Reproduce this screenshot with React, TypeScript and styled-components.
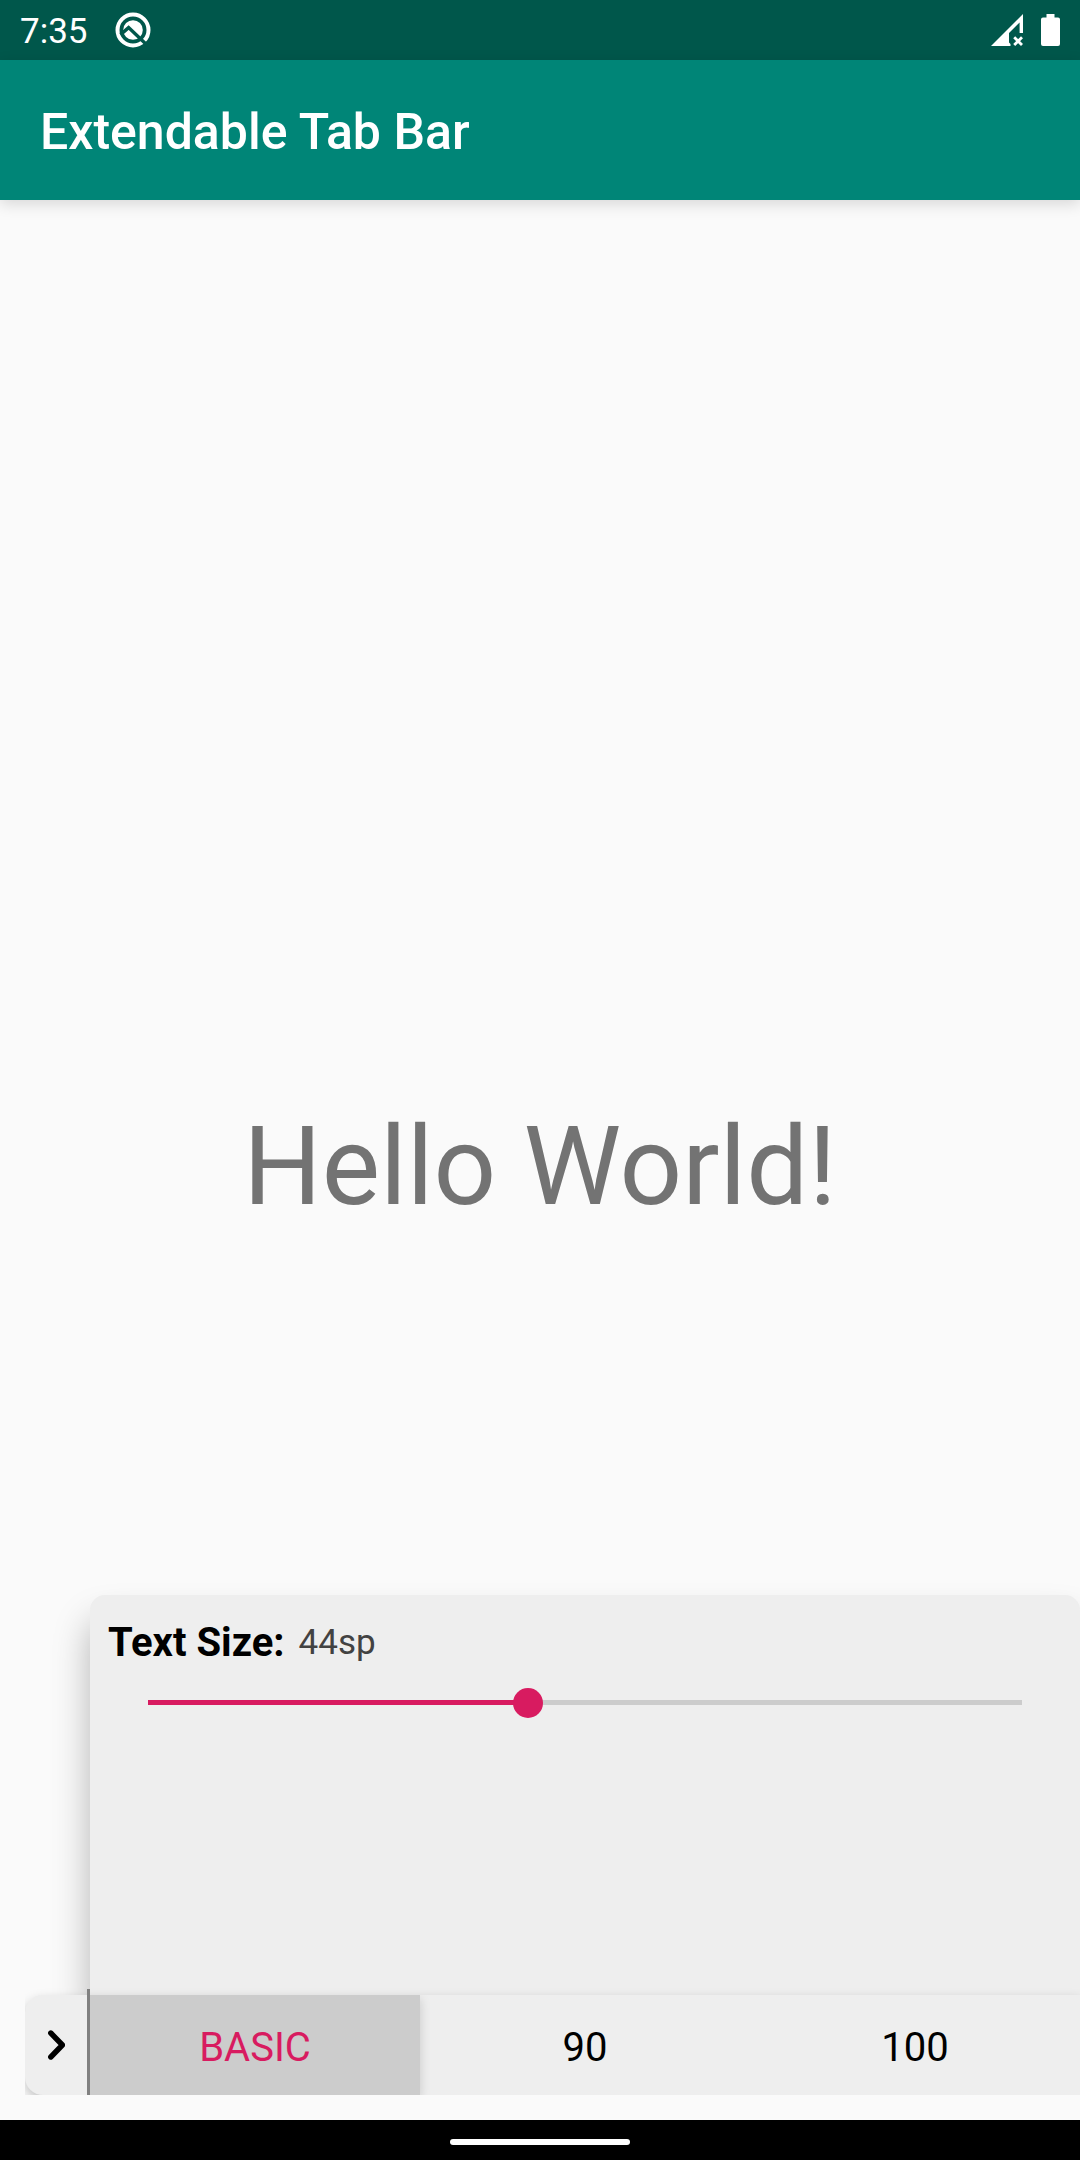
import React, { useState } from "react";
import styled, { createGlobalStyle } from "styled-components";

const GlobalStyle = createGlobalStyle`
  *, *::before, *::after { box-sizing: border-box; }
  body { margin: 0; background: #fafafa; }
  button, input { font: inherit; color: inherit; }
`;

const accent = "#d81b60";
const surface = "#eeeeee";
const selectedGrey = "#cccccc";

const Screen = styled.div`
  display: flex;
  flex-direction: column;
  min-height: 100vh;
  overflow: hidden;
  background: #fafafa;
  font-family: Roboto, "Liberation Sans", sans-serif;
`;

const StatusBar = styled.div`
  display: flex;
  align-items: center;
  justify-content: space-between;
  height: 60px;
  padding: 2px 20px 0;
  background: #00574b;
  color: #ffffff;
  font-size: 35px;
`;

const StatusGroup = styled.div<{ $gap: number }>`
  display: flex;
  align-items: center;
  gap: ${(p) => p.$gap}px;

  svg {
    display: block;
    margin-top: -2px;
  }
`;

const AppBar = styled.header`
  display: flex;
  align-items: center;
  height: 140px;
  padding: 4px 40px 0;
  background: #008577;
  box-shadow: 0 4px 14px rgba(0, 0, 0, 0.14);
  z-index: 1;
`;

const Title = styled.h1`
  margin: 0;
  color: #ffffff;
  font-size: 50px;
  font-weight: 500;
`;

const Main = styled.main`
  display: grid;
  flex: 1;
  grid-template-columns: minmax(0, 1fr);

  & > * {
    grid-area: 1 / 1;
  }
`;

const Greeting = styled.p`
  place-self: center;
  margin: 0;
  padding-top: 12px;
  color: #737373;
  font-size: 110px;
`;

const Sheet = styled.section`
  align-self: end;
  padding: 0 0 25px 25px;
`;

const Panel = styled.div`
  display: flex;
  flex-direction: column;
  gap: 18px;
  height: 400px;
  margin-left: 65px;
  padding: 20px 18px;
  border-radius: 15px 15px 0 0;
  background: ${surface};
  box-shadow: 0 26px 36px rgba(0, 0, 0, 0.28);
`;

const SizeRow = styled.div`
  display: flex;
  align-items: center;
  gap: 14px;
  line-height: 55px;
`;

const SizeLabel = styled.label`
  color: #000000;
  font-size: 40px;
  font-weight: 700;
`;

const SizeValue = styled.output`
  color: #424242;
  font-size: 35px;
`;

const Slider = styled.input`
  --edge: 15px;
  --stop: calc(var(--edge) + (100% - 30px) * var(--fraction));
  appearance: none;
  height: 30px;
  margin: 0 25px;
  background: linear-gradient(
      to right,
      transparent var(--edge),
      ${accent} var(--edge),
      ${accent} var(--stop),
      ${selectedGrey} var(--stop),
      ${selectedGrey} calc(100% - var(--edge)),
      transparent calc(100% - var(--edge))
    )
    0 12px / 100% 5px no-repeat;

  &::-webkit-slider-thumb {
    appearance: none;
    width: 30px;
    height: 30px;
    border-radius: 50%;
    background: ${accent};
  }
`;

const TabBar = styled.div`
  position: relative;
  display: flex;
  height: 100px;
  clip-path: inset(-20px 0 0 0);
  border-radius: 18px 0 0 18px;
  background: ${surface};
  box-shadow: 0 5px 12px rgba(0, 0, 0, 0.22);
`;

const Toggle = styled.button`
  display: flex;
  align-items: center;
  justify-content: center;
  width: 62px;
  padding: 0;
  border: 0;
  background: none;
`;

const Divider = styled.span`
  width: 3px;
  margin-top: -6px;
  background: #808080;
`;

const Tabs = styled.div`
  display: flex;
  flex: 1;
`;

const Tab = styled.button<{ $selected: boolean }>`
  position: relative;
  z-index: ${(p) => (p.$selected ? 1 : 0)};
  flex: 1;
  padding: 4px 0 0;
  border: 0;
  background: ${(p) => (p.$selected ? selectedGrey : "transparent")};
  box-shadow: ${(p) => (p.$selected ? "0 4px 10px rgba(0, 0, 0, 0.16)" : "none")};
  clip-path: inset(0 -20px 0 0);
  color: ${(p) => (p.$selected ? accent : "#000000")};
  font-size: 40px;
`;

const NavBar = styled.footer`
  display: flex;
  align-items: center;
  justify-content: center;
  height: 40px;
  padding-top: 4px;
  background: #000000;
`;

const HomeHandle = styled.span`
  width: 180px;
  height: 6px;
  border-radius: 3px;
  background: #ffffff;
`;

const AndroidQIcon = () => (
  <svg width="36" height="36" viewBox="0 0 36 36" fill="none" aria-hidden="true">
    <circle cx="18" cy="18" r="15.5" stroke="#fff" strokeWidth="4" />
    <circle cx="18" cy="18" r="9.8" fill="#fff" />
    <path d="M5.5 22.6 13.6 15.6 33 34" stroke="#00574b" strokeWidth="3.4" />
  </svg>
);

const SignalIcon = () => (
  <svg width="32" height="32" viewBox="0 0 32 32" fill="none" aria-hidden="true">
    <path
      d="M0 32 32 0V19H28.6V8.4L18 19V28.5L19.5 30V32Z"
      fill="#fff"
    />
    <path d="M23.2 23.2 31 31M31 23.2 23.2 31" stroke="#fff" strokeWidth="2.8" />
  </svg>
);

const BatteryIcon = () => (
  <svg width="19" height="32" viewBox="0 0 19 32" aria-hidden="true">
    <path
      d="M5.5 0h8v3.5h3.5a2 2 0 0 1 2 2V30a2 2 0 0 1-2 2H2a2 2 0 0 1-2-2V5.5a2 2 0 0 1 2-2h3.5z"
      fill="#fff"
    />
  </svg>
);

const ChevronIcon = () => (
  <svg width="18" height="30" viewBox="0 0 18 30" fill="none" aria-hidden="true">
    <path
      d="M3.8 3 15.4 15 3.8 27"
      stroke="#000"
      strokeWidth="5.4"
      strokeLinecap="round"
      strokeLinejoin="round"
    />
  </svg>
);

const MIN_SIZE = 1;
const MAX_SIZE = 100;
const tabNames = ["BASIC", "90", "100"];

export default function App() {
  const [size, setSize] = useState(44);
  const [selected, setSelected] = useState("BASIC");
  const fraction = (size - MIN_SIZE) / (MAX_SIZE - MIN_SIZE);

  return (
    <Screen>
      <GlobalStyle />
      <StatusBar>
        <StatusGroup $gap={27}>
          <span>7:35</span>
          <AndroidQIcon />
        </StatusGroup>
        <StatusGroup $gap={18}>
          <SignalIcon />
          <BatteryIcon />
        </StatusGroup>
      </StatusBar>
      <AppBar>
        <Title>Extendable Tab Bar</Title>
      </AppBar>
      <Main>
        <Greeting>Hello World!</Greeting>
        <Sheet>
          <Panel>
            <SizeRow>
              <SizeLabel htmlFor="text-size">Text Size:</SizeLabel>
              <SizeValue htmlFor="text-size">{size}sp</SizeValue>
            </SizeRow>
            <Slider
              id="text-size"
              type="range"
              min={MIN_SIZE}
              max={MAX_SIZE}
              value={size}
              onChange={(e) => setSize(Number(e.target.value))}
              style={{ "--fraction": fraction } as React.CSSProperties}
            />
          </Panel>
          <TabBar>
            <Toggle type="button" aria-label="Collapse tab bar">
              <ChevronIcon />
            </Toggle>
            <Divider />
            <Tabs role="tablist">
              {tabNames.map((name) => (
                <Tab
                  key={name}
                  type="button"
                  role="tab"
                  aria-selected={name === selected}
                  $selected={name === selected}
                  onClick={() => setSelected(name)}
                >
                  {name}
                </Tab>
              ))}
            </Tabs>
          </TabBar>
        </Sheet>
      </Main>
      <NavBar>
        <HomeHandle />
      </NavBar>
    </Screen>
  );
}
